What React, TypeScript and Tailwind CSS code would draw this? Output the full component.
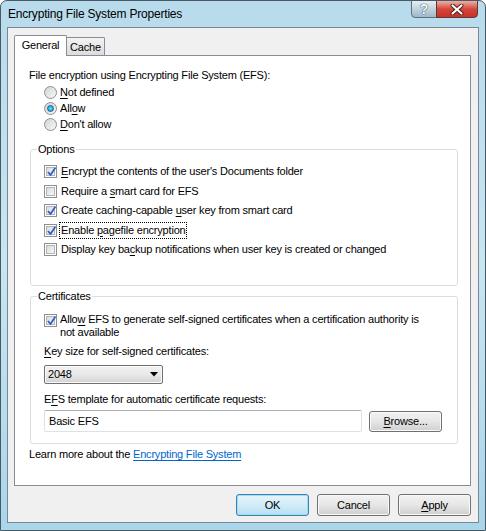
import React from 'react';

const font = "font-['Liberation_Sans',Arial,sans-serif]";

function Checkbox({ checked }: { checked?: boolean }) {
  return (
    <div className="w-[13px] h-[13px] shrink-0 border border-[#8e8f8f] bg-white p-[1px]">
      <div className="relative w-full h-full border border-[#b2b6bb] bg-gradient-to-br from-[#d9dcdf] to-[#f6f6f6]">
        {checked && (
          <svg className="absolute -left-[2px] -top-[3px]" width="13" height="13" viewBox="0 0 13 13">
            <path d="M3 7 L5.5 10 L10.5 2.5" fill="none" stroke="#2f5fc4" strokeWidth="1.8" strokeLinejoin="round" />
          </svg>
        )}
      </div>
    </div>
  );
}

function Radio({ checked }: { checked?: boolean }) {
  return (
    <div className="w-[13px] h-[13px] shrink-0 rounded-full border border-[#8e8f8f] bg-gradient-to-br from-[#d0d3d6] to-[#f8f8f8] flex items-center justify-center">
      {checked && (
        <div className="w-[7px] h-[7px] rounded-full border border-[#1b5f8e] bg-[radial-gradient(circle,#5fe6ff_0%,#1fa6d8_70%,#1c6da0_100%)]" />
      )}
    </div>
  );
}

function Key({ children }: { children: React.ReactNode }) {
  return <span className="underline underline-offset-[2px]">{children}</span>;
}

function Button({ children, primary, w = 'w-[73px]', h = 'h-[22px]' }: { children: React.ReactNode; primary?: boolean; w?: string; h?: string }) {
  return (
    <div
      className={`${w} ${h} rounded-[3px] border flex items-center justify-center text-black ${
        primary
          ? 'border-[#3c7fb1] bg-gradient-to-b from-[#e5f4fc] via-[#d2ecf9] to-[#b6dff2] shadow-[inset_0_0_0_1px_#9fe0f5]'
          : 'border-[#707070] bg-gradient-to-b from-[#f2f2f2] via-[#e6e6e6] to-[#cfcfcf] shadow-[inset_0_0_0_1px_#fafafa]'
      }`}
    >
      {children}
    </div>
  );
}

function GroupBox({ label, h, children }: { label: string; h: string; children: React.ReactNode }) {
  return (
    <div className={`relative ml-[1px] w-[428px] ${h} rounded-[3px] border border-[#d5dfe5]`}>
      <span className="absolute left-[6px] -top-[7px] bg-white px-[1px] leading-[13px]">{label}</span>
      {children}
    </div>
  );
}

export default function App() {
  const options: { checked: boolean; label: React.ReactNode; focus?: boolean; h: string }[] = [
    { checked: true, h: 'h-[19px]', label: <><Key>E</Key>ncrypt the contents of the user's Documents folder</> },
    { checked: false, h: 'h-[20px]', label: <>Require a <Key>s</Key>mart card for EFS</> },
    { checked: true, h: 'h-[19px]', label: <>Create caching-capable <Key>u</Key>ser key from smart card</> },
    { checked: true, h: 'h-[20px]', focus: true, label: <>Enable <Key>p</Key>agefile encryption</> },
    { checked: false, h: 'h-[19px]', label: <>Display key ba<Key>c</Key>kup notifications when user key is created or changed</> },
  ];

  return (
    <div className={`${font} w-[486px] h-[531px] rounded-t-[7px] border border-[#4b5866] bg-gradient-to-b from-[#b8dbec] via-[#c8e5f2] to-[#a9d6ea] text-[11px] tracking-[-0.2px] text-black overflow-hidden`}>
      {/* title bar */}
      <div className="h-[26px] flex items-start">
        <div className="pl-[7px] pt-[6px] text-[12px] leading-[15px] text-black">Encrypting File System Properties</div>
        <div className="ml-auto mr-[7px] flex -mt-[1px]">
          <div className="w-[26px] h-[18px] rounded-bl-[4px] border border-[#5d7081] bg-gradient-to-b from-[#e6eef3] via-[#c1d3de] to-[#9fb9c9] flex items-center justify-center">
            <span className="text-[14px] font-bold leading-none text-[#f4f8fa] [text-shadow:0_0_1px_#2c3e4c,0_0_1px_#2c3e4c]">?</span>
          </div>
          <div className="w-[42px] h-[18px] -ml-[1px] rounded-br-[4px] border border-[#5d3a3a] bg-gradient-to-b from-[#eab0a6] via-[#d2453a] to-[#c9302a] flex items-center justify-center">
            <svg width="14" height="11" viewBox="0 0 14 11">
              <path d="M2.5 1.5 L11.5 9.5 M11.5 1.5 L2.5 9.5" stroke="#4a1a18" strokeWidth="4" strokeLinecap="round" />
              <path d="M2.5 1.5 L11.5 9.5 M11.5 1.5 L2.5 9.5" stroke="#ffffff" strokeWidth="2.2" strokeLinecap="round" />
            </svg>
          </div>
        </div>
      </div>

      {/* client area */}
      <div className="ml-[6px] w-[472px] h-[496px] border border-[#7a8896] bg-[#f0f0f0] pl-[6px] pt-[7px]">
        {/* tabs */}
        <div className="relative z-10 flex items-end h-[21px] -mb-[1px]">
          <div className="w-[53px] h-[21px] rounded-t-[2px] border border-b-0 border-[#898c95] bg-white flex items-start justify-center pt-[3px] leading-[13px]">
            General
          </div>
          <div className="w-[38px] h-[18px] mb-[1px] rounded-tr-[2px] border border-l-0 border-b-0 border-[#898c95] bg-gradient-to-b from-[#f3f3f3] to-[#dcdcdc] flex items-start justify-center pt-[3px] leading-[13px]">
            Cache
          </div>
        </div>

        {/* tab panel */}
        <div className="w-[457px] h-[431px] border border-[#898c95] bg-white pl-[14px] pt-[11px] leading-[13px]">
          <div className="h-[16px] flex items-center">File encryption using Encrypting File System (EFS):</div>
          <div className="mt-[1px] ml-[15px]">
            {[
              { c: false, l: <><Key>N</Key>ot defined</> },
              { c: true, l: <>All<Key>o</Key>w</> },
              { c: false, l: <><Key>D</Key>on't allow</> },
            ].map((r, i) => (
              <div key={i} className="h-[16px] flex items-center gap-[3px]">
                <Radio checked={r.c} />
                <span>{r.l}</span>
              </div>
            ))}
          </div>

          <div className="mt-[17px]">
            <GroupBox label="Options" h="h-[137px]">
              <div className="pt-[12px] pl-[13px]">
                {options.map((o, i) => (
                  <div key={i} className={`${o.h} flex items-center gap-[2px]`}>
                    <Checkbox checked={o.checked} />
                    <span className={`px-[1px] leading-[15px] border ${o.focus ? 'border-dotted border-black' : 'border-transparent'}`}>{o.label}</span>
                  </div>
                ))}
              </div>
            </GroupBox>
          </div>

          <div className="mt-[10px]">
            <GroupBox label="Certificates" h="h-[148px]">
              <div className="pt-[16px] pl-[13px]">
                <div className="flex items-start gap-[3px]">
                  <div className="mt-[1px]">
                    <Checkbox checked />
                  </div>
                  <span className="leading-[13px]">
                    Allo<Key>w</Key> EFS to generate self-signed certificates when a certification authority is
                    <br />
                    not available
                  </span>
                </div>
                <div className="mt-[6px] h-[13px]"><Key>K</Key>ey size for self-signed certificates:</div>
                <div className="mt-[7px] w-[119px] h-[19px] rounded-[2px] border border-[#707070] bg-gradient-to-b from-[#f2f2f2] via-[#e9e9e9] to-[#d2d2d2] shadow-[inset_0_0_0_1px_#fbfbfb] flex items-center pl-[3px] pr-[4px]">
                  <span>2048</span>
                  <svg className="ml-auto" width="8" height="5" viewBox="0 0 8 5">
                    <path d="M0 0 H8 L4 4.5 Z" fill="#000" />
                  </svg>
                </div>
                <div className="mt-[9px] h-[13px]">E<Key>F</Key>S template for automatic certificate requests:</div>
                <div className="mt-[4px] flex items-center gap-[7px]">
                  <div className="w-[318px] h-[22px] rounded-[2px] border border-[#dbe2e8] border-t-[#abadb3] bg-white flex items-center pl-[4px]">
                    Basic EFS
                  </div>
                  <Button w="w-[73px]" h="h-[21px]"><span><Key>B</Key>rowse...</span></Button>
                </div>
              </div>
            </GroupBox>
          </div>

          <div className="mt-[4px] h-[13px]">
            Learn more about the <span className="text-[#0066cc] underline underline-offset-[2px]">Encrypting File System</span>
          </div>
        </div>

        {/* buttons */}
        <div className="mt-[8px] w-[457px] flex justify-end gap-[8px]">
          <Button primary>OK</Button>
          <Button>Cancel</Button>
          <Button><span><Key>A</Key>pply</span></Button>
        </div>
      </div>
    </div>
  );
}
